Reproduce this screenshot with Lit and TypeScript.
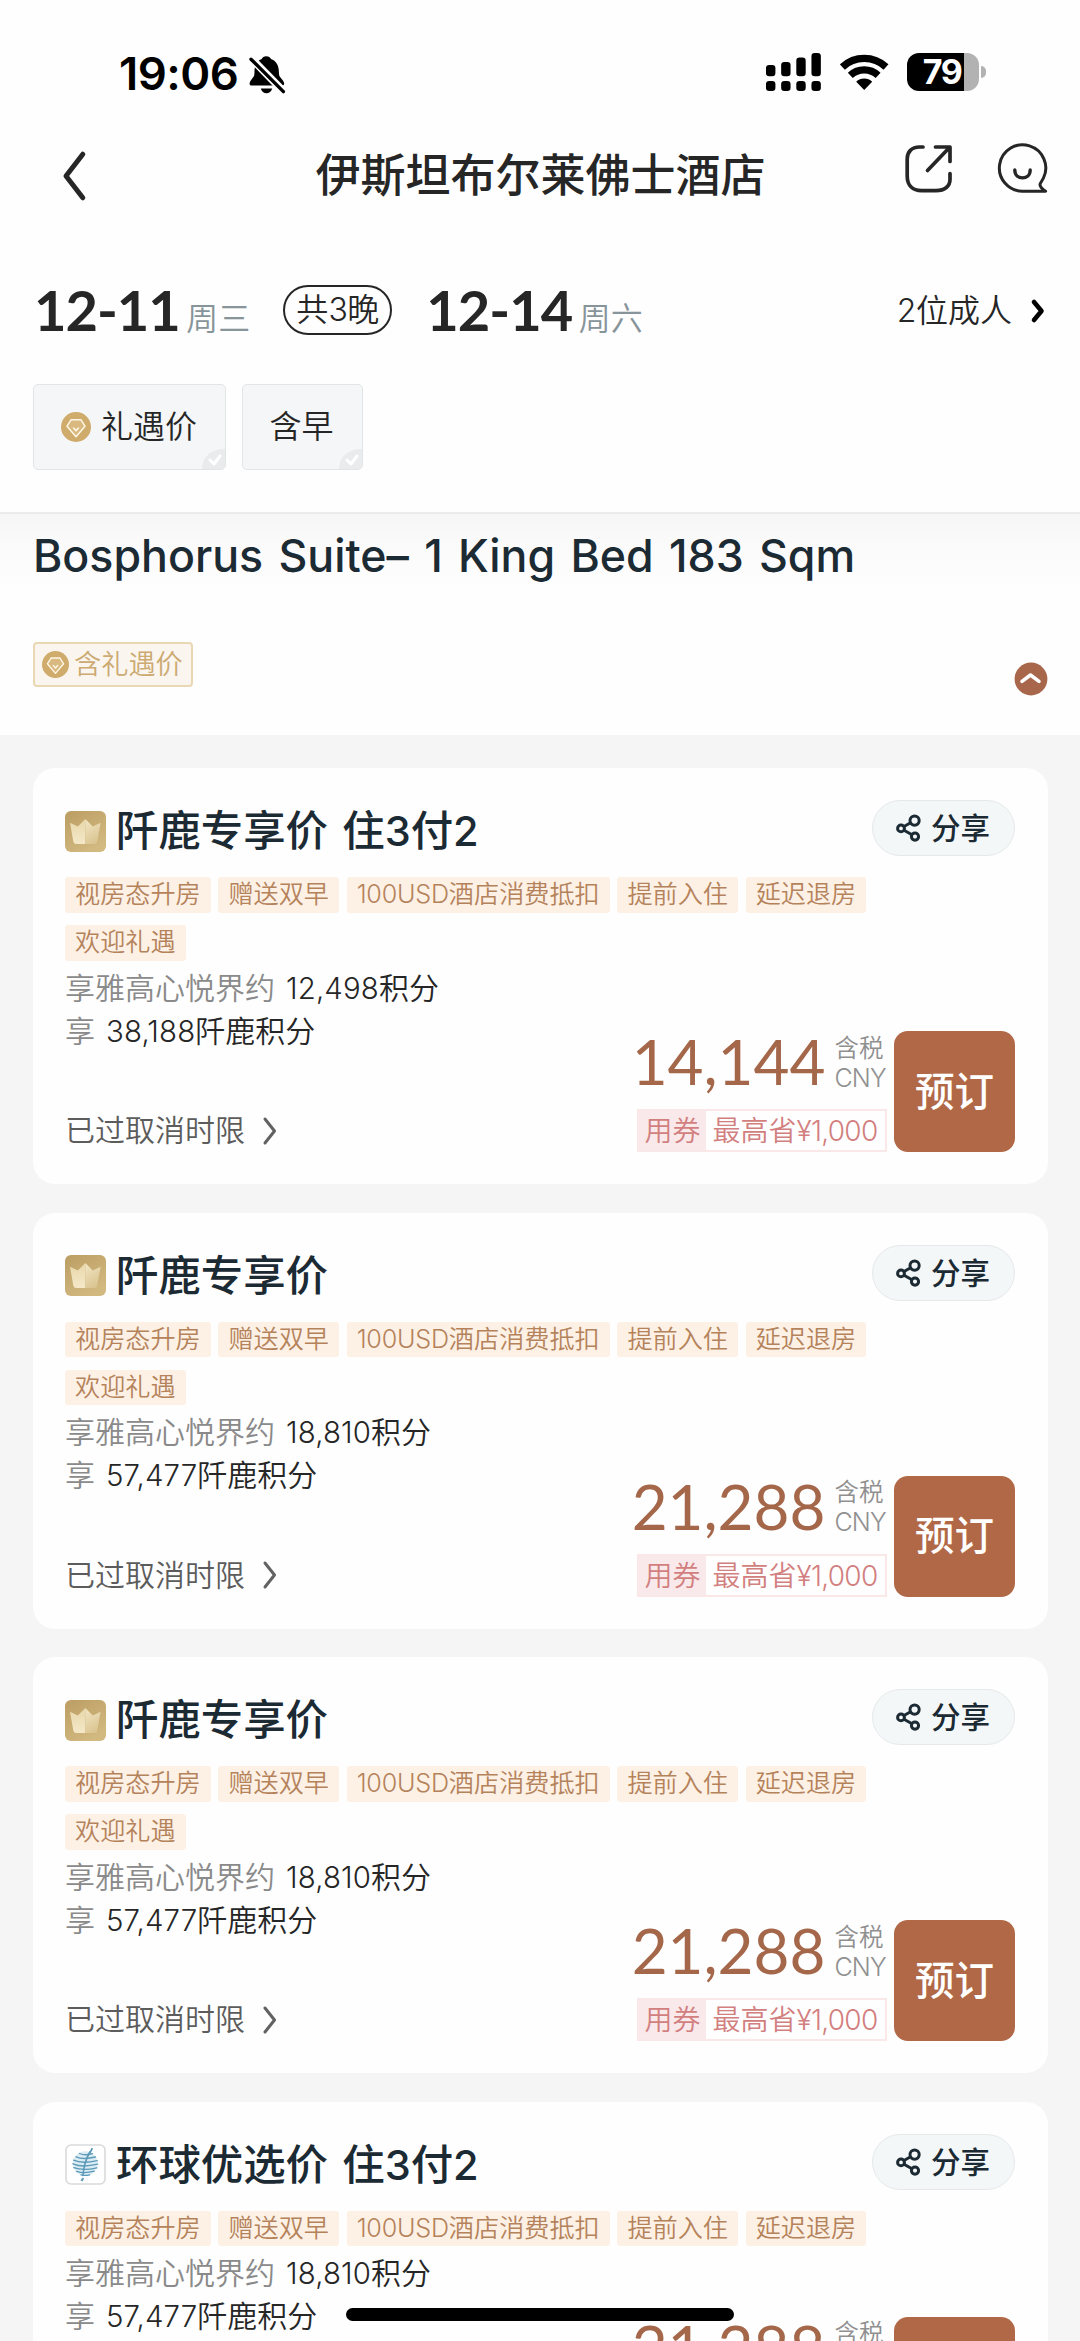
import { LitElement, html, svg, css, nothing } from "lit";
import { customElement, property } from "lit/decorators.js";

interface Rate {
  icon: "crown" | "globe";
  name: string;
  tags: string[];
  partnerPoints: string;
  points: string;
  price: string;
}

const TAGS = ["视房态升房", "赠送双早", "100USD酒店消费抵扣", "提前入住", "延迟退房"];

const RATES: Rate[] = [
  { icon: "crown", name: "阡鹿专享价 住3付2", tags: [...TAGS, "欢迎礼遇"], partnerPoints: "12,498", points: "38,188", price: "14,144" },
  { icon: "crown", name: "阡鹿专享价", tags: [...TAGS, "欢迎礼遇"], partnerPoints: "18,810", points: "57,477", price: "21,288" },
  { icon: "crown", name: "阡鹿专享价", tags: [...TAGS, "欢迎礼遇"], partnerPoints: "18,810", points: "57,477", price: "21,288" },
  { icon: "globe", name: "环球优选价 住3付2", tags: TAGS, partnerPoints: "18,810", points: "57,477", price: "21,288" },
];

/* Wraps runs of Latin letters and digits so they can be tracked apart from the Chinese text. */
const mixed = (text: string) =>
  text.split(/([0-9A-Za-z,¥]+)/).map((part) =>
    /^[0-9A-Za-z,¥]+$/.test(part) ? html`<span class="num">${part}</span>` : part
  );

const gem = (size: number) => html`
  <svg width=${size} height=${size} viewBox="0 0 30 30">
    <circle cx="15" cy="15" r="15" fill="#cfab6c" />
    <path d="M10 7.8H20L24 14.2L15 24.8L6 14.2Z" fill="#d9b97f" stroke="#fff7e6" stroke-width="1.5" stroke-linejoin="round" />
    <path d="M12.6 16L15 18.8L17.4 16" fill="none" stroke="#fff7e6" stroke-width="1.6" stroke-linecap="round" stroke-linejoin="round" />
  </svg>`;

const crown = html`
  <svg width="41" height="41" viewBox="0 0 41 41">
    <defs>
      <linearGradient id="gold" x1="0" y1="0" x2="0.6" y2="1">
        <stop offset="0" stop-color="#bb9d63" /><stop offset="1" stop-color="#d2b980" />
      </linearGradient>
      <linearGradient id="cream" x1="0" y1="0" x2="0" y2="1">
        <stop offset="0" stop-color="#e8d7aa" /><stop offset="1" stop-color="#f4e8c8" />
      </linearGradient>
      <linearGradient id="shade" x1="0" y1="0" x2="0.4" y2="1">
        <stop offset="0" stop-color="#f3e7c6" /><stop offset="1" stop-color="#dbc693" />
      </linearGradient>
    </defs>
    <rect width="41" height="41" rx="6" fill="url(#gold)" />
    <path d="M5 11.8L12.8 15.6L20.3 8V33H11.5Q8.8 33 8.3 30.5Z" fill="url(#cream)" />
    <path d="M20.3 8L27.8 15.6L35.6 11.8L32.3 30.5Q31.8 33 29 33H20.3Z" fill="url(#shade)" />
  </svg>`;

const globe = html`
  <svg width="41" height="41" viewBox="0 0 41 41">
    <rect x="1" y="1" width="39" height="39" rx="5" fill="#fff" stroke="#d9dadb" stroke-width="1.6" />
    <ellipse cx="20.3" cy="19.5" rx="12.4" ry="12.2" fill="#dcecf3" />
    <g fill="none" stroke="#5b99b8" stroke-width="1.35" stroke-linecap="round">
      <path d="M14.5 9.5Q20 12 27.4 9.6" /><path d="M11 12.8Q18 16 30.5 13" />
      <path d="M8.6 16.2Q17 20 32.2 16.6" /><path d="M8 19.8Q17 24 32.6 20.2" />
      <path d="M8.8 23.6Q18 27 31.8 23.8" /><path d="M11.6 27.4Q19 30 29.2 27.2" />
      <path d="M16 30.8Q20 32 24.6 30.8" />
      <path d="M24.8 8C21.5 14 18.5 24 18 31.5" stroke-width="1.6" />
      <path d="M27 4.8L25.2 8.4" stroke-width="1.8" />
    </g>
    <path d="M17.4 33.4L19.2 34.4L17.6 37.6L15.4 36.4Z" fill="#6ca3bf" />
  </svg>`;

const cjk = css`"Noto Sans CJK SC"`;

@customElement("rate-card")
class RateCard extends LitElement {
  @property({ attribute: false }) rate!: Rate;

  static styles = css`
    :host { display: block; }
    svg { display: block; flex: none; }
    .card {
      box-sizing: border-box; display: flex; flex-direction: column;
      padding: 32px 33px 32px 32px; border-radius: 22px; background: #fefefe;
      font-family: Inter, ${cjk}, sans-serif; font-weight: 350;
    }
    .head { display: flex; align-items: center; height: 62px; padding-bottom: 15px; }
    .name {
      flex: 1; margin-left: 10px; font-size: 42.4px; line-height: 60px; font-weight: 500;
      color: #1b2a33; white-space: pre; word-spacing: 3px;
    }
    .name .num { font-size: 41.5px; letter-spacing: 0; }
    .share {
      box-sizing: border-box; display: flex; align-items: center; gap: 9px;
      width: 143px; height: 56px; padding-left: 23px; margin-top: -6px;
      border: 1.5px solid #e6e9ea; border-radius: 28px; background: #f4f7f8;
      color: #1b2a33; font-size: 29.5px; line-height: 40px; font-weight: 500;
    }
    .tags { display: flex; flex-wrap: wrap; gap: 12.5px 7.7px; max-width: 840px; }
    .tag {
      height: 35.5px; padding: 0 10px; border-radius: 3px; background: #fdf1e6;
      color: #b5835b; font-size: 25.15px; line-height: 35px; white-space: nowrap;
    }
    .tag .num { letter-spacing: -0.2px; }
    .body { display: flex; justify-content: space-between; height: 191.5px; }
    .left { display: flex; flex-direction: column; padding-top: 6px; box-sizing: border-box; }
    .line { height: 43px; line-height: 43px; font-size: 30px; color: #8a8a8a; white-space: nowrap; }
    .line b { margin-left: 11px; font-weight: 350; color: #262626; }
    .line .num { font-size: 29.4px; letter-spacing: 0.15px; }
    .cancel {
      display: flex; align-items: center; gap: 17px; height: 43px; margin-top: auto;
      font-size: 30px; line-height: 43px; color: #5c5c5c;
    }
    .right { display: flex; align-items: flex-end; gap: 7.5px; }
    .cost { display: flex; flex-direction: column; align-items: flex-end; }
    .amount { display: flex; align-items: center; gap: 9px; height: 62px; margin-bottom: 17px; }
    .price { font-family: Lato, sans-serif; font-size: 62px; line-height: 62px; font-weight: 400; color: #a5674a; }
    .unit { display: flex; flex-direction: column; width: 52px; margin-top: 3px; font-size: 24.5px; line-height: 30px; color: #909090; }
    .unit .cny { font-weight: 300; font-size: 25px; letter-spacing: -0.9px; }
    .coupon {
      box-sizing: border-box; display: flex; height: 43px; border: 2px solid #fae7e8;
      color: #d27f80; font-size: 28px; line-height: 40px; white-space: nowrap;
    }
    .use { width: 67px; text-indent: -1px; text-align: center; background: #f9e9ea; }
    .save { padding: 0 7px 0 6px; }
    .save .num { letter-spacing: -0.7px; }
    .book {
      display: flex; align-items: center; justify-content: center; width: 121px; height: 121px;
      border-radius: 14px; background: #b16846; color: #fff; font-size: 39.5px; font-weight: 500;
      line-height: 56px;
    }
  `;

  render() {
    const r = this.rate;
    if (!r) return nothing;
    return html`
      <div class="card">
        <div class="head">
          ${r.icon === "crown" ? crown : globe}
          <div class="name">${mixed(r.name)}</div>
          <div class="share">
            <svg width="26" height="28" viewBox="0 0 26 28" fill="none" stroke="#1b2a33" stroke-width="3">
              <path d="M8 12.5L15 8.5M8 16.2L16 20.8" />
              <circle cx="18.6" cy="6.6" r="4.6" /><circle cx="5" cy="14.4" r="3.4" /><circle cx="19" cy="22.6" r="3.6" />
            </svg>
            <span>分享</span>
          </div>
        </div>
        <div class="tags">${r.tags.map((t) => html`<div class="tag">${mixed(t)}</div>`)}</div>
        <div class="body">
          <div class="left">
            <div class="line">享雅高心悦界约<b><span class="num">${r.partnerPoints}</span>积分</b></div>
            <div class="line">享<b><span class="num">${r.points}</span>阡鹿积分</b></div>
            <div class="cancel">
              <span>已过取消时限</span>
              <svg width="16" height="30" viewBox="0 0 16 30" fill="none" stroke="#626262" stroke-width="3" stroke-linecap="round" stroke-linejoin="round">
                <path d="M3 3L12.5 15L3 27" />
              </svg>
            </div>
          </div>
          <div class="right">
            <div class="cost">
              <div class="amount">
                <span class="price">${r.price}</span>
                <div class="unit"><span>含税</span><span class="cny">CNY</span></div>
              </div>
              <div class="coupon">
                <span class="use">用券</span><span class="save">${mixed("最高省¥1,000")}</span>
              </div>
            </div>
            <div class="book">预订</div>
          </div>
        </div>
      </div>`;
  }
}

@customElement("app-root")
class AppRoot extends LitElement {
  static styles = css`
    :host {
      display: block; position: relative; width: 1080px; height: 2341px; overflow: hidden;
      background: #f5f5f5; font-family: Inter, ${cjk}, sans-serif; color: #262626; font-weight: 350;
    }
    svg { display: block; flex: none; }
    .top { background: #fefefe; height: 512px; border-bottom: 2px solid #ebebeb; }
    .status {
      box-sizing: border-box; display: flex; align-items: center; height: 104px;
      padding: 40px 94px 0 119px; color: #000;
    }
    .time { margin-top: 3px; font-size: 45.5px; line-height: 54px; font-weight: 600; letter-spacing: -0.5px; }
    .bell { margin-left: 11px; margin-top: 4px; }
    .radio { display: flex; align-items: center; gap: 18.5px; margin-left: auto; }
    .battery { display: flex; align-items: center; gap: 2px; }
    .cell {
      display: flex; align-items: center; justify-content: center; box-sizing: border-box;
      width: 72px; height: 38px; padding-right: 2px; border-radius: 12px;
      background: linear-gradient(90deg, #000 57px, #b2b2b2 57px);
      color: #fff; font-size: 34px; line-height: 38px; font-weight: 700; letter-spacing: -1.5px;
    }
    .nub { width: 5px; height: 12px; border-radius: 0 6px 6px 0; background: #b2b2b2; }
    .nav { display: flex; align-items: center; height: 144px; padding: 0 32px 0 61px; }
    .title { flex: 1; padding-left: 160px; text-align: center; font-size: 45px; line-height: 64px; font-weight: 500; }
    .actions { display: flex; gap: 43px; margin: -16px 0 0 70px; }
    .stay { display: flex; align-items: center; height: 124px; padding: 0 34px; }
    .date { font-family: Lato, sans-serif; font-size: 56px; line-height: 60px; font-weight: 700; letter-spacing: -1px; color: #262626; }
    .day { margin: 18px 0 0 6.5px; font-size: 32px; line-height: 40px; color: #87949a; }
    .nights {
      box-sizing: border-box; display: flex; align-items: center; justify-content: center;
      width: 109px; height: 50px; margin: 0 34px 0 33px; border: 2px solid #262626; border-radius: 25px;
      font-size: 32px; line-height: 40px;
    }
    .nights .num, .guests .num { letter-spacing: -0.5px; }
    .guests { display: flex; align-items: center; gap: 18px; margin: 2px 0 0 auto; font-size: 32px; line-height: 44px; }
    .chips { display: flex; gap: 15.5px; padding: 12px 33px 0; }
    .chip {
      position: relative; overflow: hidden; box-sizing: border-box; display: flex; align-items: center;
      gap: 10px; height: 86px; padding: 0 28px 0 27px; border: 1.5px solid #e2e5e6; border-radius: 5px;
      background: #f4f6f7; font-size: 32px; line-height: 46px;
    }
    .tick { position: absolute; right: 0; bottom: 0; }
    .room {
      box-sizing: border-box; height: 221px; padding: 15px 32px 0 33px; display: flex; flex-direction: column;
      background: linear-gradient(180deg, #f6f6f6 0, #fafafa 28px, #fefefe 78px);
    }
    .suite { font-size: 44.7px; line-height: 54px; font-weight: 500; color: #1b2a33; white-space: nowrap; word-spacing: 3.4px; }
    .perk { display: flex; justify-content: space-between; margin-top: 59px; }
    .badge {
      box-sizing: border-box; display: flex; align-items: center; gap: 5px; height: 45px; padding: 0 8px 0 7px;
      border: 2px solid #ead8b4; border-radius: 4px; background: #faf6ef;
      color: #ccaa72; font-size: 27.2px; line-height: 40px;
    }
    .fold { margin-top: 20px; }
    .list { display: flex; flex-direction: column; gap: 28.6px; padding: 33px 32px 0 33px; }
    .home {
      position: absolute; left: 346px; bottom: 20px; width: 388px; height: 13px;
      border-radius: 6.5px; background: #000;
    }
  `;

  private tick() {
    return html`
      <svg class="tick" width="23" height="20" viewBox="0 0 23 20">
        <path d="M0 20C0 8 9 0 23 0V20Z" fill="#e9ebec" />
        <path d="M8 11L12 15L18 7" fill="none" stroke="#fff" stroke-width="3" stroke-linecap="round" stroke-linejoin="round" />
      </svg>`;
  }

  render() {
    return html`
      <div class="top">
        <div class="status">
          <span class="time">19:06</span>
          <svg class="bell" width="38" height="39" viewBox="0 0 38 39">
            <path d="M17.3 1.2C19.8 1.2 21.3 2.4 22 4C27 6 29.6 10 29.8 15.5L30 19C30.2 23 35.2 25 35.2 28.8C35.2 30 34.2 30.6 33.2 30.6H2.8C1.6 30.6.6 30 .6 28.7C.6 25 5.2 23 5.4 19L5.5 15.5C5.7 10 8 6 12.7 4C13.4 2.4 14.8 1.2 17.3 1.2Z" />
            <path d="M11.8 33.4H23.2C22.4 36.4 20.2 38.2 17.5 38.2S12.6 36.4 11.8 33.4Z" />
            <path d="M-1 0L36 38" stroke="#fefefe" stroke-width="7.6" />
            <path d="M2 4.2L34.4 36.6" stroke="#000" stroke-width="3.4" stroke-linecap="round" />
          </svg>
          <div class="radio">
            <svg width="55" height="38" viewBox="0 0 55 38">
              ${[12, 9, 4.6, 0].map(
                (y, i) => svg`
                  <rect x=${i * 15.15} y=${y} width="9.4" height=${23.2 - y} rx="3.2" />
                  <rect x=${i * 15.15} y="28" width="9.4" height="10" rx="3.2" />`
              )}
            </svg>
            <svg width="49" height="38" viewBox="0 0 49 38" fill="none" stroke="#000">
              <path d="M2.4 14A32 32 0 0 1 46 14" stroke-width="7.2" />
              <path d="M10.3 22.4A20.4 20.4 0 0 1 38.1 22.4" stroke-width="7.2" />
              <path d="M24.2 37L16.2 28.7A11.6 11.6 0 0 1 32.2 28.7Z" fill="#000" stroke="none" />
            </svg>
            <div class="battery"><div class="cell">79</div><div class="nub"></div></div>
          </div>
        </div>
        <div class="nav">
          <svg width="26" height="54" viewBox="0 0 26 54" fill="none" stroke="#262626" stroke-width="5" stroke-linecap="round" stroke-linejoin="round">
            <path d="M21.8 5.2L5 27L21.8 48.8" />
          </svg>
          <div class="title">伊斯坦布尔莱佛士酒店</div>
          <div class="actions">
            <svg width="50" height="51" viewBox="0 0 50 51" fill="none" stroke="#262626" stroke-width="3.7" stroke-linecap="round" stroke-linejoin="round">
              <path d="M19 4H15.5C7.5 4 3.2 9 3.2 16V33C3.2 42 8.5 47.6 17.5 47.6H32C41 47.6 46 43 46 36.5V30.5" />
              <path d="M31.5 4H46V18.5M45 5L23.5 27.5" />
            </svg>
            <svg width="51" height="51" viewBox="0 0 51 51" fill="none" stroke="#262626" stroke-width="3" stroke-linecap="round" stroke-linejoin="round">
              <path d="M25.5 48.2A23.2 23.2 0 1 1 46.4 35.2C45 38 43.4 39.4 43 41.6C42.8 44.4 45.4 46.2 48.6 48.2Z" />
              <path d="M17.8 27C17.8 37.5 33.2 37.5 33.2 27" stroke-width="3.4" />
            </svg>
          </div>
        </div>
        <div class="stay">
          <span class="date">12-11</span><span class="day">周三</span>
          <div class="nights"><span>${mixed("共3晚")}</span></div>
          <span class="date">12-14</span><span class="day">周六</span>
          <div class="guests">
            <span>${mixed("2位成人")}</span>
            <svg width="16" height="28" viewBox="0 0 16 28" fill="none" stroke="#000" stroke-width="4.6" stroke-linecap="round" stroke-linejoin="round">
              <path d="M4 5L11.5 14L4 23" />
            </svg>
          </div>
        </div>
        <div class="chips">
          <div class="chip">${gem(30)}<span>礼遇价</span>${this.tick()}</div>
          <div class="chip"><span>含早</span>${this.tick()}</div>
        </div>
      </div>
      <div class="room">
        <div class="suite">Bosphorus Suite– 1 King Bed 183 Sqm</div>
        <div class="perk">
          <div class="badge">${gem(27)}<span>含礼遇价</span></div>
          <svg class="fold" width="34" height="34" viewBox="0 0 34 34">
            <circle cx="17" cy="17" r="16.4" fill="#a8664b" />
            <path d="M8 19.4L16.5 13L25 19.4" fill="none" stroke="#fff" stroke-width="3.6" stroke-linecap="round" stroke-linejoin="round" />
          </svg>
        </div>
      </div>
      <div class="list">${RATES.map((r) => html`<rate-card .rate=${r}></rate-card>`)}</div>
      <div class="home"></div>`;
  }
}
